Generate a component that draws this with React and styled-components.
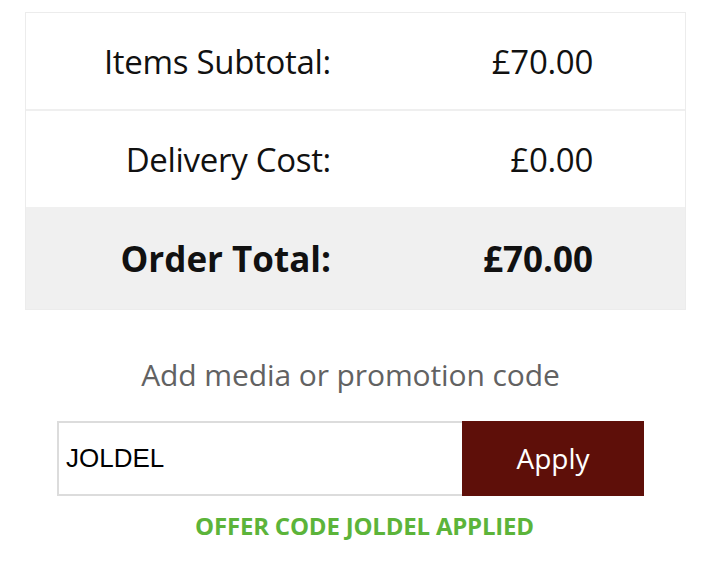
import React from "react";
import styled, { createGlobalStyle } from "styled-components";

const Global = createGlobalStyle`
  html, body { margin: 0; padding: 0; background: #fff; }
  body { font-family: "Open Sans", "Liberation Sans", sans-serif; }
`;

const Page = styled.div`
  width: 716px;
  height: 572px;
  padding-top: 12px;
  box-sizing: border-box;
`;

const Summary = styled.div`
  margin-left: 25px;
  width: 661px;
  border: 1px solid #ececec;
  box-sizing: border-box;
`;

const Row = styled.div`
  display: grid;
  grid-template-columns: 305px 262px;
  align-items: center;
  height: ${(p) => p.$h}px;
  background: ${(p) => (p.$total ? "#f0f0f0" : "#fff")};
  border-bottom: ${(p) => (p.$sep ? "2px solid #efefef" : "none")};
  font-size: ${(p) => (p.$total ? 35 : 33)}px;
  font-weight: ${(p) => (p.$total ? 700 : 400)};
  color: #111;
  letter-spacing: ${(p) => (p.$total ? "0px" : "-0.3px")};
`;

const Label = styled.div`
  text-align: right;
`;

const Value = styled.div`
  text-align: right;
`;

const Promo = styled.div`
  margin-left: 57px;
  width: 587px;
  display: flex;
  flex-direction: column;
  align-items: center;
`;

const PromoTitle = styled.div`
  margin-top: 45px;
  font-size: 30px;
  color: #626262;
  line-height: 40px;
  letter-spacing: -0.1px;
`;

const InputGroup = styled.div`
  margin-top: 26px;
  display: flex;
  width: 100%;
  height: 75px;
`;

const CodeInput = styled.input`
  flex: 0 0 405px;
  box-sizing: border-box;
  height: 75px;
  border: 2px solid #dcdcdc;
  border-right: none;
  padding: 0 0 0 7px;
  font-family: "Liberation Sans", Arial, sans-serif;
  font-size: 26px;
  color: #000;
  outline: none;
  background: #fff;
`;

const ApplyButton = styled.button`
  flex: 1;
  height: 75px;
  border: none;
  background: #5e0f09;
  color: #fff;
  font-family: "Open Sans", sans-serif;
  font-size: 28px;
  padding: 0 0 2px;
  cursor: pointer;
`;

const Success = styled.div`
  margin-top: 15px;
  margin-left: 28px;
  font-size: 24px;
  font-weight: 700;
  color: #5cb43a;
  letter-spacing: -0.2px;
  line-height: 30px;
`;

export default function App() {
  return (
    <>
      <Global />
      <Page>
        <Summary>
          <Row $h={96} $sep>
            <Label>Items Subtotal:</Label>
            <Value>£70.00</Value>
          </Row>
          <Row $h={96}>
            <Label>Delivery Cost:</Label>
            <Value>£0.00</Value>
          </Row>
          <Row $h={102} $total>
            <Label>Order Total:</Label>
            <Value>£70.00</Value>
          </Row>
        </Summary>
        <Promo>
          <PromoTitle>Add media or promotion code</PromoTitle>
          <InputGroup>
            <CodeInput defaultValue="JOLDEL" />
            <ApplyButton>Apply</ApplyButton>
          </InputGroup>
          <Success>OFFER CODE JOLDEL APPLIED</Success>
        </Promo>
      </Page>
    </>
  );
}
